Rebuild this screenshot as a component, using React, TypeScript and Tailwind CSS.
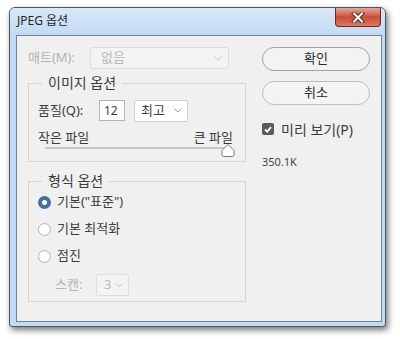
import React from 'react';

const font = { fontFamily: '"Noto Sans", "Noto Sans CJK KR", sans-serif' };

const Chevron = ({ color = '#9a9a9a' }: { color?: string }) => (
  <svg width="8" height="5" viewBox="0 0 8 5">
    <polyline points="0.5,0.5 4,4 7.5,0.5" fill="none" stroke={color} strokeWidth="1" />
  </svg>
);

const Radio = ({ checked }: { checked?: boolean }) =>
  checked ? (
    <span className="w-[13px] h-[13px] rounded-full border-[4px] border-[#476e9c] bg-white shrink-0" />
  ) : (
    <span className="w-[13px] h-[13px] rounded-full border border-[#b3b3b3] bg-white shrink-0" />
  );

export default function App() {
  return (
    <div className="w-[400px] h-[339px] bg-white pt-[7px] pl-[9px] text-[13px] text-[#3c3c3c]" style={font}>
      <div className="w-[377px] h-[320px] flex flex-col rounded-t-[6px] rounded-b-[3px] border border-[#4d5663] bg-[#c3daf3] shadow-[2px_3px_6px_rgba(0,0,0,0.55)]">
        {/* title bar */}
        <div className="h-[27px] flex items-start rounded-t-[5px] bg-gradient-to-b from-[#d9e8f8] to-[#c3daf3]">
          <span className="mt-[5px] ml-[7px] text-[12px] leading-[16px] text-[#262626]">JPEG 옵션</span>
          <div className="ml-auto mr-[4px] w-[46px] h-[19px] flex items-center justify-center rounded-b-[4px] border border-t-0 border-[#6f2a20] bg-gradient-to-b from-[#e9a798] via-[#c84d38] to-[#d77a62]">
            <svg width="14" height="11" viewBox="0 0 14 11">
              <path d="M3 1.5 L11 9.5 M11 1.5 L3 9.5" stroke="#5a2a22" strokeWidth="4" strokeLinecap="square" />
              <path d="M3 1.5 L11 9.5 M11 1.5 L3 9.5" stroke="#ffffff" strokeWidth="2" strokeLinecap="square" />
            </svg>
          </div>
        </div>

        {/* client */}
        <div className="flex-1 ml-[6px] mr-[3px] mb-[4px] border border-[#6f8196] bg-[#f0f0f0] flex gap-[16px] pl-[11px] pt-[11px]">
          {/* left column */}
          <div className="w-[218px] flex flex-col">
            <div className="h-[22px] flex items-center">
              <span className="w-[62px] text-[#b4b4b4]">매트(M):</span>
              <div className="w-[139px] h-[22px] flex items-center justify-between pl-[10px] pr-[6px] border border-[#dedede] rounded-[2px] bg-[#f3f3f3]">
                <span className="text-[#b9b9b9]">없음</span>
                <Chevron color="#c4c4c4" />
              </div>
            </div>

            <fieldset className="mt-[5px] border border-[#d4d4d4] pb-[4px]">
              <legend className="ml-[13px] px-[6px] leading-[18px] text-[14px]">이미지 옵션</legend>
              <div className="mt-[8px] pl-[9px] h-[21px] flex items-center">
                <span className="w-[61px]">품질(Q):</span>
                <div className="w-[26px] h-[21px] flex items-center pl-[4px] border border-[#b5b5b5] bg-white text-[12px]">12</div>
                <div className="ml-[9px] w-[54px] h-[22px] flex items-center justify-between pl-[6px] pr-[5px] border border-[#cfcfcf] rounded-[2px] bg-white">
                  <span>최고</span>
                  <Chevron />
                </div>
              </div>
              <div className="mt-[9px] pl-[9px] pr-[12px] h-[14px] leading-[14px] flex justify-between">
                <span>작은 파일</span>
                <span>큰 파일</span>
              </div>
              <div className="relative ml-[16px] w-[183px] h-[13px]">
                <div className="absolute left-0 right-0 top-[3px] h-[2px] bg-[#c6c6c6]" />
                <svg className="absolute right-[-7px] top-[0px]" width="14" height="13" viewBox="0 0 14 13">
                  <path d="M7 0.5 L13 6.5 L13 11 Q13 12.5 11.5 12.5 L2.5 12.5 Q1 12.5 1 11 L1 6.5 Z" fill="#ffffff" stroke="#7a7a7a" strokeWidth="1" strokeLinejoin="round" />
                </svg>
              </div>
            </fieldset>

            <fieldset className="mt-[10px] border border-[#d4d4d4] pb-[5px]">
              <legend className="ml-[13px] px-[6px] leading-[18px] text-[14px]">형식 옵션</legend>
              <div className="mt-[2px] pl-[9px] flex flex-col gap-[7px]">
                <div className="h-[20px] flex items-center gap-[6px]">
                  <Radio checked />
                  <span>기본("표준")</span>
                </div>
                <div className="h-[20px] flex items-center gap-[6px]">
                  <Radio />
                  <span>기본 최적화</span>
                </div>
                <div className="h-[20px] flex items-center gap-[6px]">
                  <Radio />
                  <span>점진</span>
                </div>
              </div>
              <div className="mt-[8px] pl-[26px] h-[22px] flex items-center">
                <span className="w-[41px] text-[#b4b4b4]">스캔:</span>
                <div className="w-[33px] h-[22px] flex items-center justify-between pl-[7px] pr-[5px] border border-[#dedede] rounded-[2px] bg-[#f3f3f3]">
                  <span className="text-[#b9b9b9]">3</span>
                  <Chevron color="#c4c4c4" />
                </div>
              </div>
            </fieldset>
          </div>

          {/* right column */}
          <div className="w-[108px] flex flex-col">
            <button className="h-[24px] rounded-full border border-[#a3a3a3] bg-[#f3f3f3] text-[13px] text-[#2a2a2a]">확인</button>
            <button className="mt-[10px] h-[24px] rounded-full border border-[#bdbdbd] bg-[#f3f3f3] text-[13px] text-[#2a2a2a]">취소</button>
            <div className="mt-[16px] h-[16px] flex items-center gap-[7px]">
              <span className="w-[12px] h-[12px] rounded-[2px] bg-[#5b5b5b] flex items-center justify-center">
                <svg width="8" height="7" viewBox="0 0 8 7">
                  <polyline points="1,3.5 3.2,5.6 7,1.2" fill="none" stroke="#ffffff" strokeWidth="1.8" />
                </svg>
              </span>
              <span className="text-[14px]">미리 보기(P)</span>
            </div>
            <div className="mt-[18px] h-[14px] leading-[14px] text-[11px] text-[#444]">350.1K</div>
          </div>
        </div>
      </div>
    </div>
  );
}
